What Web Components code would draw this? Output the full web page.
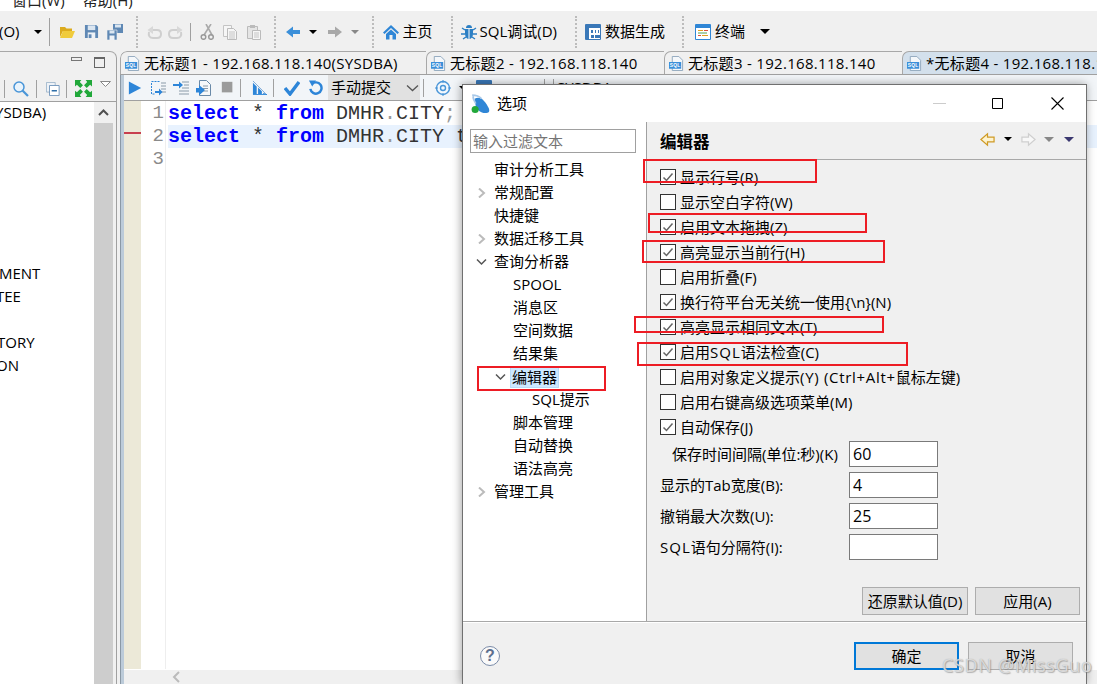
<!DOCTYPE html>
<html lang="zh">
<head>
<meta charset="utf-8">
<title>选项</title>
<style>
    html, body { margin: 0; height: 684px; overflow: hidden; background: #f0f0f0; }
    body { font: 15px/23px "Open Sans", "Noto Sans CJK SC", sans-serif; color: #000; }
</style>
</head>
<body>
<ide-app></ide-app>
<script>
const ICONS = {
    folder: '<path d="M1 3h5l1.500 1.500H13V7H4l-3 6z" fill="#dcab1e"/><path d="M1 14 4 7h12l-3 7z" fill="#f0cb3c"/>',
    save: '<path d="M1 1h12l2 2v12H1z" fill="#5f88b4"/><path d="M4 1.500h8v5H4z" fill="#dbe6f1"/><path d="M4 9h8v6H4z" fill="#eef2f7"/><path d="M5 11h3v4H5z" fill="#5f88b4"/>',
    saveall: '<path d="M6 0h10v9H6z" fill="#5f88b4"/><path d="M8 .5h6v3H8z" fill="#dbe6f1"/><path d="M0 6h10v10H0z" fill="#5f88b4" stroke="#f0f0f0" stroke-width=".6"/><path d="M2.500 6.500h5v3h-5z" fill="#dbe6f1"/><path d="M2.500 11.500h5V16h-5z" fill="#eef2f7"/>',
    undo: '<path d="M3 8c-1 4 1 6 4 6h4c3 0 4-2 4-4s-1-4-4-4H6" fill="none" stroke="#cfcfcf" stroke-width="2"/><path d="M7 2 1.500 6 7 10z" fill="#d8d8d8"/>',
    redo: '<g transform="matrix(-1 0 0 1 16 0)"><path d="M3 8c-1 4 1 6 4 6h4c3 0 4-2 4-4s-1-4-4-4H6" fill="none" stroke="#cfcfcf" stroke-width="2"/><path d="M7 2 1.500 6 7 10z" fill="#d8d8d8"/></g>',
    cut: '<path d="M12 0 5 11M7 0l6 11" stroke="#aaa" stroke-width="1.600" fill="none"/><circle cx="4.500" cy="13" r="2.300" fill="none" stroke="#999" stroke-width="1.500"/><circle cx="12" cy="13" r="2.300" fill="none" stroke="#999" stroke-width="1.500"/>',
    copy: '<path d="M1.500 1.500h8v11h-8z" fill="#f6f6f6" stroke="#c4c4c4"/><path d="M5.500 4.500h6l3 3v8h-9z" fill="#f6f6f6" stroke="#bbb"/><path d="M7 8h6M7 10h6M7 12h6M7 14h6" stroke="#c4c4c4"/>',
    paste: '<path d="M1.500 2.500h10v12h-10z" fill="#e5e5e5" stroke="#bbb"/><path d="M4 1h5v3H4z" fill="#bbb"/><path d="M6.500 6.500h8v9h-8z" fill="#f6f6f6" stroke="#bbb"/><path d="M8 9h5M8 11h5M8 13h5" stroke="#c4c4c4"/>',
    back: '<path d="M1 8 8 2.500V6h7v4H8v3.500z" fill="#3b8fd9"/>',
    fwd: '<path d="M15 8 8 2.500V6H1v4h7v3.500z" fill="#a8a8a8"/>',
    home: '<path d="M8 1 0 8.500 1.500 10 8 4l6.500 6L16 8.500z" fill="#2f86d6"/><path d="M3 10 8 5.500l5 4.500v5.500h-3.500V11h-3v4.500H3z" fill="#2f86d6"/>',
    bug: '<path d="M5 4a3 3 0 0 1 6 0z" fill="#2b7fc4"/><path d="M4 5h8v5c0 3-2 5-4 5s-4-2-4-5z" fill="#2b7fc4"/><path d="M8 5v10" stroke="#fff"/><path d="M4 6 1 4M12 6l3-2M4 10H0M12 10h4M5 13l-3 2M11 13l3 2" stroke="#2b7fc4" stroke-width="1.400"/>',
    grid: '<path d="M.5 .5h15v15H.5z" fill="#fff" stroke="#3a78b8"/><path d="M1 1h14v3H1zM1 4h3v11H1z" fill="#3a78b8"/><path d="M6 6h2v3H6zM10 6h1v3h-1zM13 6h1v3h-1zM6 11h3v3H6zM10 11h5v3h-5z" fill="#3a78b8"/>',
    term: '<path d="M.5 .5h15v15H.5z" fill="#fff" stroke="#2f86d6"/><path d="M1 1h14v3H1z" fill="#2f86d6"/><path d="M3 6.500h5" stroke="#e0a020"/><path d="M9 6.500h4" stroke="#d85040"/><path d="M3 9h9" stroke="#50a050"/><path d="M3 11.500h3" stroke="#d85040"/><path d="M7 11.500h6" stroke="#e0a020"/>',
    search: '<circle cx="6" cy="6" r="5" fill="#e8f3fc" stroke="#4a96d8" stroke-width="1.500"/><path d="m9.500 9.500 5.500 5.500" stroke="#4a96d8" stroke-width="2.200"/>',
    collapse: '<path d="M.5 .5h10v11H.5z" fill="#eef2f7" stroke="#9db3c9"/><path d="M4 4h11v11.500H4z" fill="#fff" stroke="#6a90b8"/><path d="M6.500 10h6" stroke="#2f6fa8" stroke-width="1.500"/>',
    expand: '<g fill="#21a83a"><path d="M0 0h6L4.500 1.800 7.500 5 5 7.500 1.800 4.500 0 6z"/><path d="M16 0h-6l1.500 1.800L8.500 5 11 7.500l3.200-3L16 6z"/><path d="M0 16h6l-1.500-1.800 3-3.200L5 8.500l-3.200 3L0 10z"/><path d="M16 16h-6l1.500-1.800-3-3.200L11 8.500l3.200 3L16 10z"/></g>',
    play: '<path d="M1 .5 15 8 1 15.500z" fill="#2d85d8"/>',
    step: '<path d="M1.500 1.500h8M1.500 3v11h4" fill="none" stroke="#2d85d8" stroke-dasharray="2 1"/><path d="M11 3h5M11 6h5M11 9h5M11 12h5" stroke="#8a9aa8"/><path d="M5 11h4V8.500l3.500 3.500L9 15.500V13H5z" fill="#2d85d8"/>',
    stepin: '<path d="M0 4h6V1.500L10 5 6 8.500V6H0z" fill="#2d85d8"/><path d="M9 2h7M11 5h5M9 8h7M6 11h10M6 14h10" stroke="#8a9aa8"/>',
    script: '<path d="M3.500 .5h7l4 4v11h-11z" fill="#f6f8fa" stroke="#6a8aa8"/><path d="M7 6h5M7 8.500h5M7 11h5" stroke="#8a9aa8"/><path d="M0 8h3V5l6 5-6 5.500v-3H0z" fill="#2d85d8"/>',
    stop: '<path d="M1 1h13v13H1z" fill="#9b9b9b"/>',
    chart: '<path d="M1 15V3l4 4v8zM6.500 15V8l4 4v3zM12 15v-1.500l3 1.500z" fill="#2d85d8"/><path d="m1 1 15 15" stroke="#7aa8d8"/><path d="M1 15.500h15" stroke="#2d85d8"/>',
    check: '<path d="m1 8 5 6L15 2" fill="none" stroke="#2d85d8" stroke-width="3.400"/>',
    refresh: '<path d="M4 4.500a6 6 0 1 1-1.500 5" fill="none" stroke="#2d85d8" stroke-width="2.600"/><path d="M1 .5h7.500L4.500 7z" fill="#2d85d8"/>',
    target: '<circle cx="8" cy="8" r="6.500" fill="#f3f8fd" stroke="#4a96d8" stroke-width="1.400"/><circle cx="8" cy="8" r="2.500" fill="none" stroke="#4a96d8" stroke-width="1.400"/><path d="M8 0v3M8 13v3M0 8h3M13 8h3" stroke="#4a96d8"/>',
    sqlfile: '<path d="M3.500 .5h7l4 4v11h-11z" fill="#f4f7fa" stroke="#8fa6bd"/><path d="M0 6.500h13v7H0z" fill="#3b8fd9"/><text x="6.500" y="12" text-anchor="middle" font-family="Liberation Sans" font-size="5.200" font-weight="700" fill="#fff">SQL</text>',
    logo: '<path d="M3 4c5-3 9 2 12 8 1 3 0 4-3 4-4 0-7-3-8-6" fill="#2f86d6"/><path d="M1 1c3 0 6 1 8 3M2 1c-1 3 1 5 2 7" fill="none" stroke="#a8c8e8" stroke-width="1.400"/><circle cx="3.500" cy="13" r="3" fill="#22a83a"/>',
    navback: '<path d="M1 8 8 2v3.500h7v5H8V14z" fill="#fdf3d0" stroke="#cf9a24" stroke-width="1.300"/>',
    navfwd: '<path d="M15 8 8 2v3.500H1v5h7V14z" fill="#f8f8f8" stroke="#cfcfcf" stroke-width="1.300"/>'
};

class IdeIcon extends HTMLElement {
    connectedCallback() {
        const size = this.getAttribute('size') || 16;
        const gap = this.getAttribute('gap') || 0;
        this.attachShadow({ mode: 'open' }).innerHTML = `
            <style>
                :host { display: block; flex: none; width: ${size}px; height: ${size}px; margin-left: ${gap}px; }
                svg { display: block; width: 100%; height: 100%; }
            </style>
            <svg viewBox="0 0 16 16">${ICONS[this.getAttribute('name')] || ''}</svg>`;
    }
}
customElements.define('ide-icon', IdeIcon);

// small filled triangle next to toolbar buttons
class IdeCaret extends HTMLElement {
    connectedCallback() {
        const gap = this.getAttribute('gap') || 0;
        const color = this.getAttribute('color') || '#000';
        const w = this.getAttribute('w') || 10;
        this.attachShadow({ mode: 'open' }).innerHTML = `
            <style>
                :host {
                    display: block; flex: none; width: 0; height: 0;
                    margin-left: ${gap}px;
                    border-left: ${w / 2}px solid transparent;
                    border-right: ${w / 2}px solid transparent;
                    border-top: ${w / 2}px solid ${color};
                }
            </style>`;
    }
}
customElements.define('ide-caret', IdeCaret);

class IdeSep extends HTMLElement {
    connectedCallback() {
        const gap = this.getAttribute('gap') || 0;
        const h = this.getAttribute('h') || 28;
        const dotted = this.hasAttribute('dotted');
        this.attachShadow({ mode: 'open' }).innerHTML = `
            <style>
                :host {
                    display: block; flex: none; width: 0; height: ${h}px;
                    margin-left: ${gap}px;
                    border-left: ${dotted ? '2px dotted #bcbcbc' : '1px solid #a0a0a0'};
                }
            </style>`;
    }
}
customElements.define('ide-sep', IdeSep);

class IdeLabel extends HTMLElement {
    connectedCallback() {
        const gap = this.getAttribute('gap') || 0;
        this.attachShadow({ mode: 'open' }).innerHTML = `
            <style>:host { display: block; flex: none; margin-left: ${gap}px; white-space: nowrap; }</style>
            <slot></slot>`;
    }
}
customElements.define('ide-label', IdeLabel);

class IdeToolbar extends HTMLElement {
    connectedCallback() {
        this.attachShadow({ mode: 'open' }).innerHTML = `
            <style>
                :host { display: flex; align-items: center; height: 40px; padding-top: 1px; box-sizing: border-box; background: #f0f0f0; overflow: hidden; }
            </style>
            <slot></slot>`;
    }
}
customElements.define('ide-toolbar', IdeToolbar);

class NavPane extends HTMLElement {
    connectedCallback() {
        this.attachShadow({ mode: 'open' }).innerHTML = `
            <style>
                :host {
                    display: flex; flex-direction: column; flex: none;
                    width: 116px;
                    border-top: 1px solid #a8a8a8;
                    border-right: 1px solid #a0a0a0;
                    border-top-right-radius: 7px;
                    overflow: hidden;
                }
                .head { display: flex; align-items: flex-start; height: 24px; padding-top: 5px; box-sizing: border-box; }
                .bar {
                    display: flex; align-items: center; height: 25px;
                    border-bottom: 1px solid #a0a0a0; box-sizing: content-box;
                }
                .body { flex: 1; display: flex; min-height: 0; background: #f0f0f0; }
                .list { width: 94px; background: #fff; overflow: hidden; }
                .rows { margin-top: -1px; }
                .scroll { width: 19px; display: flex; flex-direction: column; }
                .up { height: 21px; display: flex; justify-content: center; align-items: center; background: #f0f0f0; }
                .thumb { flex: 1; background: #cdcdcd; }
                .row { height: 23px; white-space: nowrap; }
                .min { width: 9px; height: 2px; border: 1px solid #777; margin-left: 71px; box-sizing: content-box; }
                .max { width: 9px; height: 8px; border: 1px solid #666; border-top-width: 2px; margin-left: 12px; }
            </style>
            <div class="head"><div class="min"></div><div class="max"></div></div>
            <div class="bar">
                <ide-sep gap="4" h="18"></ide-sep>
                <ide-icon name="search" gap="8"></ide-icon>
                <ide-sep gap="7" h="18"></ide-sep>
                <ide-icon name="collapse" size="14" gap="9"></ide-icon>
                <ide-sep gap="6" h="18"></ide-sep>
                <ide-icon name="expand" size="17" gap="8"></ide-icon>
                <svg width="11" height="6" style="margin:-10px 0 0 8px;flex:none"><path d="M.5 .5h10L5.500 5.500z" fill="#fff" stroke="#888"/></svg>
            </div>
            <div class="body">
                <div class="list">
                    <div class="rows">
                        <div class="row" style="margin-left:-5px">YSDBA)</div>
                        <div class="row"></div><div class="row"></div><div class="row"></div>
                        <div class="row"></div><div class="row"></div><div class="row"></div>
                        <div class="row" style="margin-left:-1px">MENT</div>
                        <div class="row" style="margin-left:-4px">TEE</div>
                        <div class="row"></div>
                        <div class="row" style="margin-left:-3px">TORY</div>
                        <div class="row" style="margin-left:-4px">ON</div>
                    </div>
                </div>
                <div class="scroll">
                    <div class="up"><svg width="11" height="7"><path d="M1 6 5.500 1.500 10 6" fill="none" stroke="#505050" stroke-width="2"/></svg></div>
                    <div class="thumb"></div>
                </div>
            </div>`;
    }
}
customElements.define('nav-pane', NavPane);

class EditorTab extends HTMLElement {
    connectedCallback() {
        const w = this.getAttribute('w');
        const bg = this.getAttribute('bg') || '#f0f0f0';
        this.attachShadow({ mode: 'open' }).innerHTML = `
            <style>
                :host {
                    display: flex; align-items: center; flex: none;
                    width: ${w}px; height: 23px;
                    box-sizing: border-box;
                    padding-left: 4px;
                    background: ${bg};
                    border-left: 1px solid #a8a8a8;
                    border-top: 1px solid #a8a8a8;
                    border-top-left-radius: 7px;
                    white-space: nowrap;
                    letter-spacing: .3px;
                }
                .name { margin-left: 4px; }
            </style>
            <ide-icon name="sqlfile" size="15"></ide-icon>
            <span class="name"><slot></slot></span>`;
    }
}
customElements.define('editor-tab', EditorTab);

class SqlEditor extends HTMLElement {
    connectedCallback() {
        this.attachShadow({ mode: 'open' }).innerHTML = `
            <style>
                :host { display: flex; flex-direction: column; flex: 1; min-height: 0; background: #fff; font: 20px/23px "Liberation Mono", monospace; }
                .main { flex: 1; display: flex; min-height: 0; }
                .marks { width: 17px; background: #ece9d8; padding-top: 1px; }
                .mark { height: 23px; }
                .mark i { display: block; height: 2px; margin-top: 7px; background: #c8404f; }
                .nums { border-right: 1px solid #eee; text-align: right; color: #8a8a8a; font-size: 19px; padding: 1px 1px 0 0; width: 23px; }
                .code { flex: 1; margin-left: 2px; padding-top: 1px; overflow: hidden; }
                .line { height: 23px; color: #333; white-space: pre; }
                .line.cur { background: #e8f2fe; }
                b { color: #0000ff; }
                .dim { color: #999; }
                .hscroll { height: 14px; background: #f0f0f0; margin-top: 1px; padding-left: 48px; display: flex; align-items: center; }
            </style>
            <div class="main">
                <div class="marks"><div class="mark"></div><div class="mark"><i></i></div></div>
                <div class="nums"><div>1</div><div>2</div><div>3</div></div>
                <div class="code">
                    <div class="line"><b>select</b> * <b>from</b> DMHR<span class="dim">.</span>CITY<span class="dim">;</span></div>
                    <div class="line cur"><b>select</b> * <b>from</b> DMHR<span class="dim">.</span>CITY t</div>
                </div>
            </div>
            <div class="hscroll"><svg width="8" height="12"><path d="M7 1 2 6l5 5" fill="none" stroke="#bbb" stroke-width="2"/></svg></div>`;
    }
}
customElements.define('sql-editor', SqlEditor);

class EditorPane extends HTMLElement {
    connectedCallback() {
        this.attachShadow({ mode: 'open' }).innerHTML = `
            <style>
                :host { display: flex; flex-direction: column; flex: 1; min-width: 0; margin-left: 3px; }
                .tabs { display: flex; height: 23px; border-top-left-radius: 7px; overflow: hidden; }
                .rule { height: 1px; background: #a0a0a0; }
                .inner { flex: 1; display: flex; flex-direction: column; min-height: 0; border-left: 1px solid #8b99a6; padding-left: 3px; background: #bccbd9; }
                .bar {
                    display: flex; align-items: center; height: 25px;
                    margin-left: 0; background: #f2f5f8;
                    border-bottom: 1px solid #a0a0a0;
                    white-space: nowrap; overflow: hidden;
                }
                .combo {
                    display: flex; align-items: center; flex: none;
                    width: 92px; height: 25px; margin-left: 5px;
                    padding-left: 3px; box-sizing: border-box;
                    background: #e1e1e1;
                }
                .combo svg { margin-left: 15px; }
            </style>
            <div class="tabs">
                <editor-tab w="306">无标题1 - 192.168.118.140(SYSDBA)</editor-tab>
                <editor-tab w="238">无标题2 - 192.168.118.140</editor-tab>
                <editor-tab w="238">无标题3 - 192.168.118.140</editor-tab>
                <editor-tab w="200" bg="#d3e0ec">*无标题4 - 192.168.118.140</editor-tab>
            </div>
            <div class="rule"></div>
            <div class="inner">
                <div class="bar">
                    <ide-icon name="play" size="14" gap="4"></ide-icon>
                    <ide-icon name="step" gap="8"></ide-icon>
                    <ide-icon name="stepin" gap="7"></ide-icon>
                    <ide-icon name="script" gap="7"></ide-icon>
                    <ide-icon name="stop" size="13" gap="9"></ide-icon>
                    <ide-sep gap="6" h="18"></ide-sep>
                    <ide-icon name="chart" size="15" gap="11"></ide-icon>
                    <ide-sep gap="6" h="18"></ide-sep>
                    <ide-icon name="check" size="16" gap="10"></ide-icon>
                    <ide-icon name="refresh" size="15" gap="8"></ide-icon>
                    <div class="combo">手动提交<svg width="13" height="8"><path d="M1 1.500 6.500 6.500 12 1.500" fill="none" stroke="#555" stroke-width="1.300"/></svg></div>
                    <ide-sep gap="3" h="18"></ide-sep>
                    <ide-icon name="target" gap="11"></ide-icon>
                    <ide-caret w="8" gap="8"></ide-caret>
                    <ide-icon name="grid" gap="9"></ide-icon>
                    <ide-sep gap="52" h="18"></ide-sep>
                    <ide-sep gap="8" h="18"></ide-sep>
                    <ide-label gap="3">SYSDBA</ide-label>
                </div>
                <sql-editor></sql-editor>
            </div>`;
    }
}
customElements.define('editor-pane', EditorPane);

class TreeItem extends HTMLElement {
    connectedCallback() {
        const level = +this.getAttribute('level') || 0;
        const twist = this.getAttribute('twist');
        const selected = this.hasAttribute('selected');
        const arrow = twist === 'open'
            ? '<path d="M1 2.500 5.500 7 10 2.500" fill="none" stroke="#555" stroke-width="1.500"/>'
            : twist === 'closed'
                ? '<path d="M3 .5 8 5 3 9.500" fill="none" stroke="#bbb" stroke-width="2"/>'
                : '';
        this.attachShadow({ mode: 'open' }).innerHTML = `
            <style>
                :host { display: flex; align-items: center; height: 23px; padding-left: ${13 + level * 19}px; white-space: nowrap; }
                svg { flex: none; width: 11px; height: 10px; margin-right: 6px; }
                .text { padding: 0 1px; ${selected ? 'background: #cce8ff; box-shadow: 0 0 0 1px #b8dcf8; margin: 0 -1px; line-height: 20px;' : ''} }
            </style>
            <svg viewBox="0 0 11 10">${arrow}</svg>
            <span class="text"><slot></slot></span>`;
    }
}
customElements.define('tree-item', TreeItem);

class CheckRow extends HTMLElement {
    connectedCallback() {
        const on = this.hasAttribute('checked');
        this.attachShadow({ mode: 'open' }).innerHTML = `
            <style>
                :host { display: flex; align-items: center; height: 25px; white-space: nowrap; }
                .box {
                    flex: none; width: 14px; height: 14px;
                    border: 1px solid #333; background: #fff;
                    margin-right: 4px; position: relative; top: -1px;
                    display: flex; align-items: center; justify-content: center;
                }
            </style>
            <div class="box">${on ? '<svg width="12" height="12"><path d="m1.500 6.500 3 3 6-7" fill="none" stroke="#666" stroke-width="1.500"/></svg>' : ''}</div>
            <slot></slot>`;
    }
}
customElements.define('check-row', CheckRow);

class FieldRow extends HTMLElement {
    connectedCallback() {
        const indent = this.getAttribute('indent') || 0;
        this.attachShadow({ mode: 'open' }).innerHTML = `
            <style>
                :host { display: flex; align-items: center; height: 26px; margin-bottom: 5px; white-space: nowrap; }
                .label { width: 189px; padding-left: ${indent}px; box-sizing: border-box; }
                .value {
                    width: 89px; height: 26px; box-sizing: border-box;
                    border: 1px solid #7a7a7a; background: #fff;
                    padding-left: 3px; font-size: 16px; line-height: 24px;
                }
            </style>
            <div class="label"><slot></slot></div>
            <div class="value">${this.getAttribute('value') || ''}</div>`;
    }
}
customElements.define('field-row', FieldRow);

class DlgButton extends HTMLElement {
    connectedCallback() {
        const w = this.getAttribute('w') || 105;
        const h = this.getAttribute('h') || 28;
        const primary = this.hasAttribute('primary');
        this.attachShadow({ mode: 'open' }).innerHTML = `
            <style>
                :host {
                    display: flex; align-items: center; justify-content: center; flex: none;
                    width: ${w}px; height: ${h}px; box-sizing: border-box;
                    background: #e1e1e1;
                    border: ${primary ? '2px solid #0078d7' : '1px solid #adadad'};
                    white-space: nowrap;
                }
            </style>
            <slot></slot>`;
    }
}
customElements.define('dlg-button', DlgButton);

class OptionsDialog extends HTMLElement {
    connectedCallback() {
        this.attachShadow({ mode: 'open' }).innerHTML = `
            <style>
                :host {
                    position: absolute; left: 462px; top: 84px;
                    width: 625px; height: 600px; box-sizing: border-box;
                    display: flex; flex-direction: column;
                    background: #f0f0f0;
                    border: 1px solid #707070; border-bottom: 0;
                    box-shadow: -1px 0 9px rgba(0,0,0,.35);
                }
                .title { display: flex; align-items: center; height: 37px; background: #fff; padding-left: 8px; flex: none; }
                .title span { margin-left: 7px; }
                .winbtns { margin-left: auto; display: flex; align-items: center; }
                .body { flex: 1; display: flex; min-height: 0; }
                .left { width: 183px; flex: none; background: #fff; border-right: 1px solid #a0a0a0; padding: 7px 0 0 0; }
                .filter {
                    margin: 0 10px 5px 7px; height: 24px; box-sizing: border-box;
                    border: 1px solid #a0a0a0; padding-left: 2px; color: #757575; line-height: 22px;
                }
                .right { flex: 1; display: flex; flex-direction: column; min-width: 0; }
                .head { display: flex; align-items: center; height: 38px; box-sizing: border-box; flex: none; border-bottom: 1px solid #a8a8a8; padding: 2px 0 0 13px; }
                .head strong { font-size: 16.500px; font-weight: 700; }
                .nav { margin-left: auto; display: flex; align-items: center; padding-right: 12px; margin-top: -5px; }
                .form { flex: 1; padding: 5px 0 0 13px; display: flex; flex-direction: column; min-height: 0; }
                .fields { margin-top: 1px; }
                .apply { margin-top: auto; display: flex; justify-content: flex-end; gap: 7px; padding: 0 6px 6px 0; }
                .foot {
                    height: 63px; flex: none; box-sizing: border-box;
                    border-top: 1px solid #a8a8a8;
                    box-shadow: inset 0 1px 0 #fff;
                    display: flex; align-items: center; padding: 6px 13px 0 17px; gap: 9px;
                }
                .help {
                    width: 18px; height: 18px; border: 1.500px solid #7a8ba8; border-radius: 50%;
                    display: flex; align-items: center; justify-content: center;
                    color: #5d6f8e; font: 700 16px/18px "Liberation Sans", sans-serif;
                    background: #fafafa; margin-right: auto;
                }
                .wide { letter-spacing: .7px; }
                .sql { letter-spacing: 1px; }
            </style>
            <div class="title">
                <ide-icon name="logo" size="19"></ide-icon>
                <span>选项</span>
                <div class="winbtns">
                    <svg width="13" height="3"><path d="M0 1.500h13" stroke="#ccc"/></svg>
                    <svg width="11" height="11" style="margin-left:46px"><path d="M.5 .5h10v10H.5z" fill="none" stroke="#000"/></svg>
                    <svg width="13" height="13" style="margin:0 22px 0 48px"><path d="m.5 .5 12 12M12.500 .5l-12 12" stroke="#000" stroke-width="1.100"/></svg>
                </div>
            </div>
            <div class="body">
                <div class="left">
                    <div class="filter">输入过滤文本</div>
                    <tree-item>审计分析工具</tree-item>
                    <tree-item twist="closed">常规配置</tree-item>
                    <tree-item>快捷键</tree-item>
                    <tree-item twist="closed">数据迁移工具</tree-item>
                    <tree-item twist="open">查询分析器</tree-item>
                    <tree-item level="1">SPOOL</tree-item>
                    <tree-item level="1">消息区</tree-item>
                    <tree-item level="1">空间数据</tree-item>
                    <tree-item level="1">结果集</tree-item>
                    <tree-item level="1" twist="open" selected>编辑器</tree-item>
                    <tree-item level="2">SQL提示</tree-item>
                    <tree-item level="1">脚本管理</tree-item>
                    <tree-item level="1">自动替换</tree-item>
                    <tree-item level="1">语法高亮</tree-item>
                    <tree-item twist="closed">管理工具</tree-item>
                </div>
                <div class="right">
                    <div class="head">
                        <strong>编辑器</strong>
                        <div class="nav">
                            <ide-icon name="navback" size="15"></ide-icon>
                            <ide-caret w="9" gap="9"></ide-caret>
                            <ide-icon name="navfwd" size="15" gap="9"></ide-icon>
                            <ide-caret w="10" gap="8" color="#888"></ide-caret>
                            <ide-caret w="10" gap="10" color="#3b3870"></ide-caret>
                        </div>
                    </div>
                    <div class="form">
                        <check-row checked>显示行号(R)</check-row>
                        <check-row>显示空白字符(W)</check-row>
                        <check-row checked>启用文本拖拽(Z)</check-row>
                        <check-row checked>高亮显示当前行(H)</check-row>
                        <check-row>启用折叠(F)</check-row>
                        <check-row checked>换行符平台无关统一使用{\\n}(N)</check-row>
                        <check-row checked>高亮显示相同文本(T)</check-row>
                        <check-row checked>启用<span class="sql">SQL</span>语法检查(C)</check-row>
                        <check-row>启用对象定义提示<span class="wide">(Y) (Ctrl+Alt+</span>鼠标左键)</check-row>
                        <check-row>启用右键高级选项菜单(M)</check-row>
                        <check-row checked>自动保存(J)</check-row>
                        <div class="fields">
                            <field-row value="60" indent="12">保存时间间隔(单位:秒)(K)</field-row>
                            <field-row value="4">显示的Tab宽度(B):</field-row>
                            <field-row value="25">撤销最大次数(U):</field-row>
                            <field-row><span class="sql">SQL</span>语句分隔符(I):</field-row>
                        </div>
                        <div class="apply">
                            <dlg-button w="106">还原默认值(D)</dlg-button>
                            <dlg-button w="105">应用(A)</dlg-button>
                        </div>
                    </div>
                </div>
            </div>
            <div class="foot">
                <div class="help">?</div>
                <dlg-button primary h="28">确定</dlg-button>
                <dlg-button h="28">取消</dlg-button>
            </div>`;
    }
}
customElements.define('options-dialog', OptionsDialog);

// red annotation rectangle drawn on top of the screenshot
class RedMark extends HTMLElement {
    connectedCallback() {
        const [x, y, w, h] = this.getAttribute('box').split(',');
        this.attachShadow({ mode: 'open' }).innerHTML = `
            <style>
                :host {
                    position: absolute; left: ${x}px; top: ${y}px;
                    width: ${w}px; height: ${h}px; box-sizing: border-box;
                    border: 2px solid #ed1c24;
                }
            </style>`;
    }
}
customElements.define('red-mark', RedMark);

class IdeApp extends HTMLElement {
    connectedCallback() {
        this.attachShadow({ mode: 'open' }).innerHTML = `
            <style>
                :host { display: flex; flex-direction: column; position: relative; width: 1097px; height: 684px; overflow: hidden; }
                .menu { height: 11px; flex: none; background: #fff; overflow: hidden; display: flex; color: #222; }
                .menu span { margin-top: -11px; }
                .main { flex: 1; display: flex; min-height: 0; }
                .mark {
                    position: absolute; left: 942px; top: 655px;
                    font: 18px/20px "Open Sans", sans-serif; letter-spacing: .7px;
                    color: rgba(255,255,255,.6);
                    text-shadow: 0 0 1px #999, 1px 1px 1px rgba(120,120,120,.5);
                    white-space: nowrap;
                }
            </style>
            <div class="menu"><span style="margin-left:12px">窗口(W)</span><span style="margin-left:18px">帮助(H)</span></div>
            <ide-toolbar>
                <ide-label gap="-1">(O)</ide-label>
                <ide-caret gap="14" w="9"></ide-caret>
                <ide-sep gap="7"></ide-sep>
                <ide-icon name="folder" gap="9"></ide-icon>
                <ide-icon name="save" size="15" gap="9"></ide-icon>
                <ide-icon name="saveall" gap="8"></ide-icon>
                <ide-sep dotted h="32" gap="13"></ide-sep>
                <ide-icon name="undo" gap="8"></ide-icon>
                <ide-icon name="redo" gap="6"></ide-icon>
                <ide-sep h="18" gap="6"></ide-sep>
                <ide-icon name="cut" gap="8"></ide-icon>
                <ide-icon name="copy" gap="7"></ide-icon>
                <ide-icon name="paste" gap="8"></ide-icon>
                <ide-sep dotted h="32" gap="12"></ide-sep>
                <ide-icon name="back" gap="9"></ide-icon>
                <ide-caret gap="8" w="9"></ide-caret>
                <ide-icon name="fwd" gap="10"></ide-icon>
                <ide-caret gap="8" w="9" color="#888"></ide-caret>
                <ide-sep dotted h="32" gap="13"></ide-sep>
                <ide-icon name="home" gap="9"></ide-icon>
                <ide-label gap="4">主页</ide-label>
                <ide-sep dotted h="32" gap="18"></ide-sep>
                <ide-icon name="bug" gap="8"></ide-icon>
                <ide-label gap="3">SQL调试(D)</ide-label>
                <ide-sep dotted h="32" gap="18"></ide-sep>
                <ide-icon name="grid" gap="8"></ide-icon>
                <ide-label gap="4">数据生成</ide-label>
                <ide-sep dotted h="32" gap="17"></ide-sep>
                <ide-icon name="term" gap="11"></ide-icon>
                <ide-label gap="4">终端</ide-label>
                <ide-caret gap="15"></ide-caret>
            </ide-toolbar>
            <div class="main">
                <nav-pane></nav-pane>
                <editor-pane></editor-pane>
            </div>
            <options-dialog></options-dialog>
            <red-mark box="643,159,174,24"></red-mark>
            <red-mark box="648,213,219,20"></red-mark>
            <red-mark box="642,240,243,23"></red-mark>
            <red-mark box="634,316,250,17"></red-mark>
            <red-mark box="637,342,271,24"></red-mark>
            <red-mark box="477,366,129,25"></red-mark>
            <div class="mark">CSDN @MissGuo</div>`;
    }
}
customElements.define('ide-app', IdeApp);
</script>
</body>
</html>
